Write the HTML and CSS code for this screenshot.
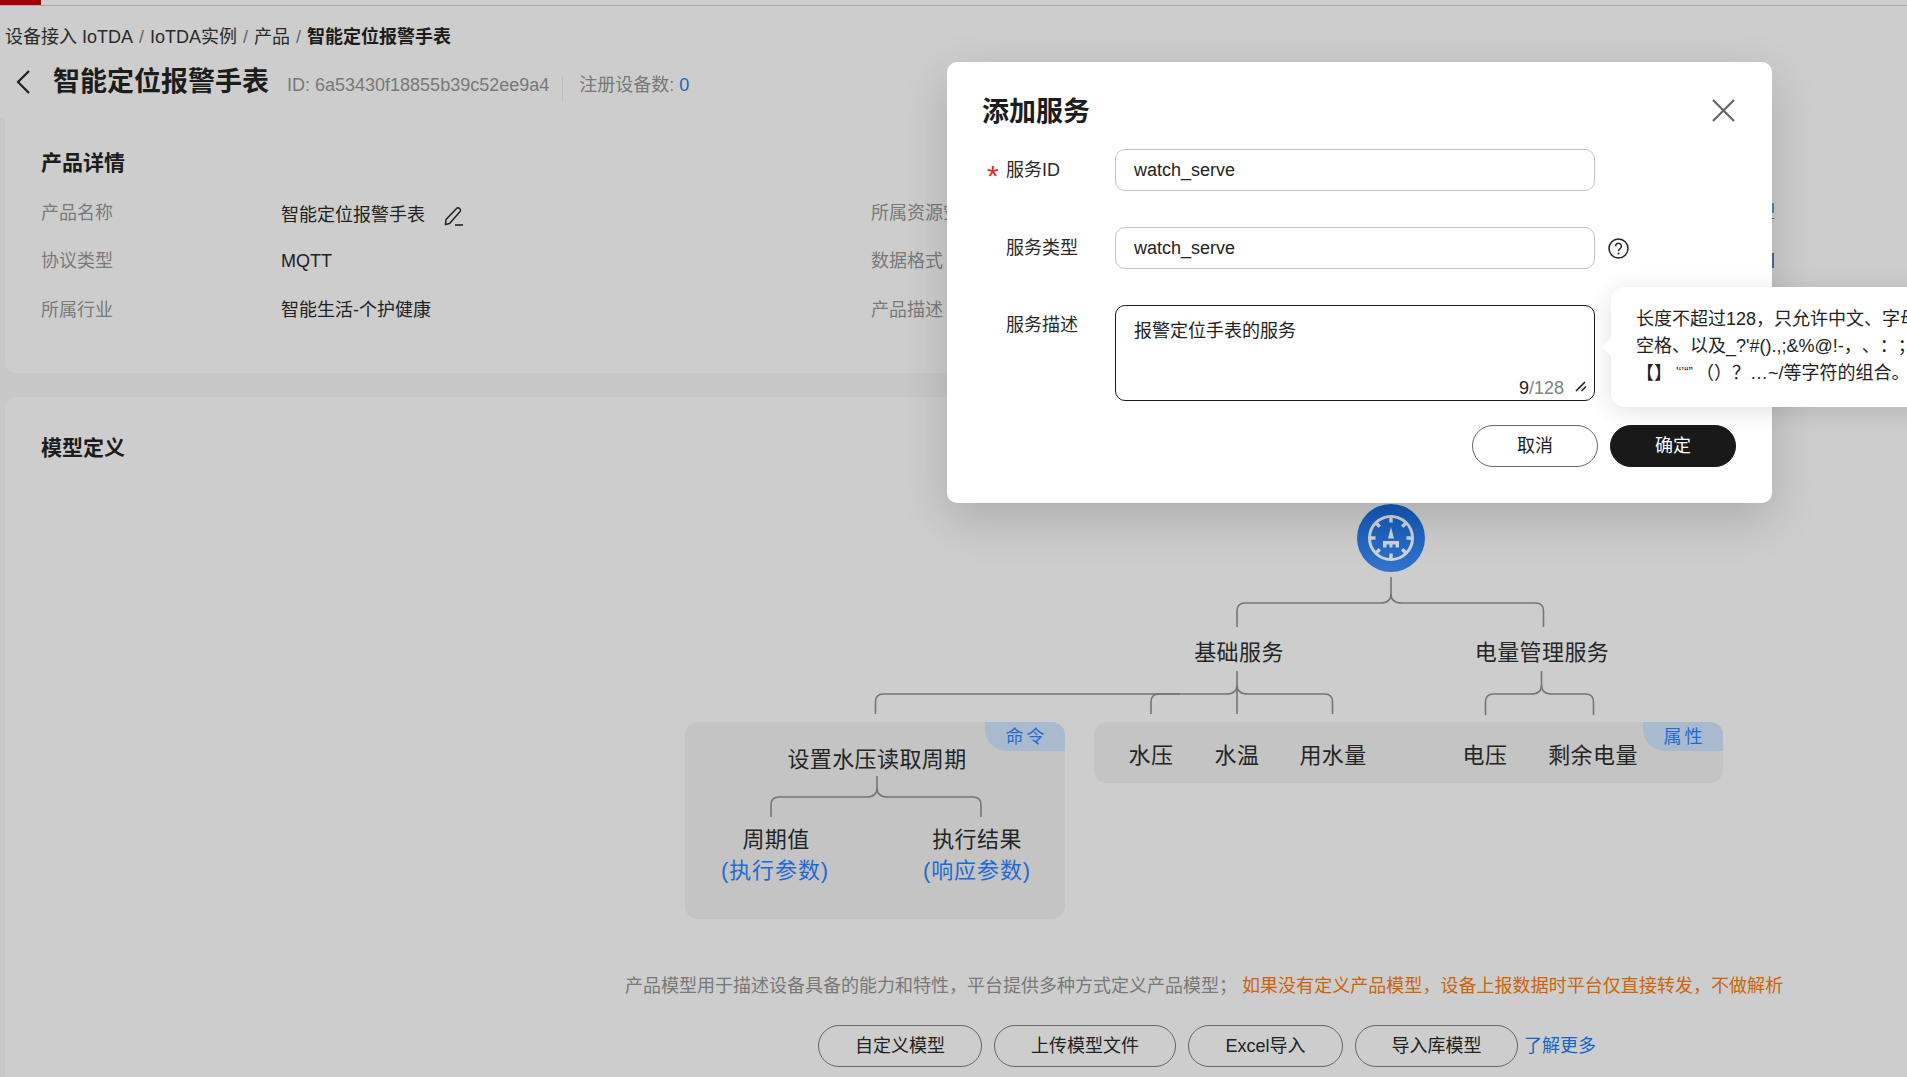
FILE: index.html
```html
<!DOCTYPE html>
<html lang="zh-CN">
<head>
<meta charset="utf-8">
<title>智能定位报警手表</title>
<link rel="stylesheet" href="styles.css">
</head>
<body>
<div class="topbar"><div class="topbar-red"></div></div>
<header class="page-head">
  <nav class="crumbs">
    <span>设备接入 IoTDA</span><i>/</i><span>IoTDA实例</span><i>/</i><span>产品</span><i>/</i><b>智能定位报警手表</b>
  </nav>
  <div class="title-row">
    <svg class="back" width="14" height="24" viewBox="0 0 14 24"><path d="M13 1 2 12l11 11" fill="none" stroke="#1f1f1f" stroke-width="2.2"/></svg>
    <h1>智能定位报警手表</h1>
    <span class="meta">ID: 6a53430f18855b39c52ee9a4</span>
    <span class="sep"></span>
    <span class="meta">注册设备数: <em>0</em></span>
  </div>
</header>

<section class="card card-detail">
  <h2>产品详情</h2>
  <div class="details">
    <span class="k">产品名称</span>
    <span class="v v-first">智能定位报警手表
      <svg class="edit" width="20" height="20" viewBox="0 0 20 20"><path d="M1.5 18.5 2 13.5 12.5 2.5a2 2 0 0 1 3-.1l.4.4a2 2 0 0 1 0 2.9L5.6 17.5z" fill="none" stroke="#222" stroke-width="1.5" stroke-linejoin="round"/><path d="M11 19h8" stroke="#222" stroke-width="1.6"/></svg>
    </span>
    <span class="k">所属资源空间</span>
    <span class="k">协议类型</span>
    <span class="v">MQTT</span>
    <span class="k">数据格式</span>
    <span class="k">所属行业</span>
    <span class="v">智能生活-个护健康</span>
    <span class="k">产品描述</span>
  </div>
  <span class="edge edge-a"></span><span class="edge edge-b"></span><span class="edge edge-c"></span>
</section>

<section class="card card-model">
  <h2>模型定义</h2>
  <div class="tree">
    <div class="group group-cmd"><span class="badge">命令</span></div>
    <div class="group group-prop"><span class="badge">属性</span></div>
    <svg class="links" width="1060" height="430" viewBox="0 0 1060 430">
      <g fill="none" stroke="#757575" stroke-width="1.6">
        <path d="M711 77V94Q711 103 700 103H565Q557 103 557 111V127"/>
        <path d="M711 94Q711 103 722 103H855.500Q863.500 103 863.500 111V127"/>
        <path d="M557 171V185Q557 194 546 194H203.500Q195.500 194 195.500 202V214"/>
        <path d="M557 185Q557 194 568 194H644.500Q652.500 194 652.500 202V214"/>
        <path d="M557 185V214"/>
        <path d="M471 214V202Q471 194 479 194H500"/>
        <path d="M861.500 171V185Q861.500 194 851 194H813.500Q805.500 194 805.500 202V215"/>
        <path d="M861.500 185Q861.500 194 872 194H905.500Q913.500 194 913.500 202V215"/>
        <path d="M197 276V288Q197 297 186 297H99Q91 297 91 305V317"/>
        <path d="M197 288Q197 297 208 297H293Q301 297 301 305V317"/>
      </g>
    </svg>
    <svg class="root" width="68" height="68" viewBox="0 0 68 68">
      <defs><linearGradient id="rootfill" x1="0" y1="0" x2="0" y2="1"><stop offset="0" stop-color="#1259bb"/><stop offset="1" stop-color="#3373ca"/></linearGradient></defs>
      <circle cx="34" cy="34" r="34" fill="url(#rootfill)"/>
      <circle cx="34" cy="34" r="21.500" fill="none" stroke="#ced3db" stroke-width="3"/>
      <g stroke="#ced3db" stroke-width="3.400">
        <path d="M34 12.500v6M34 49.500v6M12.500 34h6M49.500 34h6M18.800 18.800l4 4M49.200 18.800l-4 4M18.800 49.200l4-4M49.200 49.200l-4-4"/>
      </g>
      <path d="M34 23l3 11.500h-6z" fill="#ced3db"/>
      <path d="M26 37h16v6.500h-3.500v-3h-3v3h-3v-3h-3v3H26z" fill="#ced3db"/>
    </svg>
    <span class="node n-base">基础服务</span>
    <span class="node n-power">电量管理服务</span>
    <span class="node n-set">设置水压读取周期</span>
    <span class="node n-period">周期值</span>
    <span class="node node-blue n-in">(执行参数)</span>
    <span class="node n-result">执行结果</span>
    <span class="node node-blue n-out">(响应参数)</span>
    <span class="node n-p1">水压</span>
    <span class="node n-p2">水温</span>
    <span class="node n-p3">用水量</span>
    <span class="node n-p4">电压</span>
    <span class="node n-p5">剩余电量</span>
  </div>
  <p class="hint">产品模型用于描述设备具备的能力和特性，平台提供多种方式定义产品模型；<span>如果没有定义产品模型，设备上报数据时平台仅直接转发，不做解析</span></p>
  <div class="actions">
    <button class="btn btn-a">自定义模型</button>
    <button class="btn btn-b">上传模型文件</button>
    <button class="btn btn-c">Excel导入</button>
    <button class="btn btn-d">导入库模型</button>
    <a class="more">了解更多</a>
  </div>
</section>

<div class="modal">
  <div class="modal-head">
    <h3>添加服务</h3>
    <svg class="close" width="23" height="23" viewBox="0 0 23 23"><path d="M1 1l21 21M22 1 1 22" stroke="#666" stroke-width="2.200" fill="none"/></svg>
  </div>
  <div class="form">
    <div class="row">
      <label class="lab"><span class="star">*</span>服务ID</label>
      <input class="field" value="watch_serve">
    </div>
    <div class="row">
      <label class="lab"><span class="star"></span>服务类型</label>
      <input class="field" value="watch_serve">
      <svg class="help" width="21" height="21" viewBox="0 0 21 21"><circle cx="10.500" cy="10.500" r="9.500" fill="none" stroke="#222" stroke-width="1.500"/><path d="M7.600 8.200a2.900 2.900 0 1 1 4.600 2.300c-1 .7-1.700 1.200-1.700 2.500" fill="none" stroke="#222" stroke-width="1.500"/><circle cx="10.500" cy="15.500" r="1" fill="#222"/></svg>
    </div>
    <div class="row row-top">
      <label class="lab"><span class="star"></span>服务描述</label>
      <div class="area-wrap">
        <textarea class="area">报警定位手表的服务</textarea>
        <span class="count"><b>9</b>/128</span>
        <svg class="grip" width="12" height="11" viewBox="0 0 12 11"><path d="M1 10 10 1M6.500 10 11 5.500" stroke="#222" stroke-width="1.600"/></svg>
      </div>
    </div>
  </div>
  <div class="modal-foot">
    <button class="mbtn">取消</button>
    <button class="mbtn mbtn-ok">确定</button>
  </div>
  <div class="tip">
    <div>长度不超过128，只允许中文、字母、数字、</div>
    <div>空格、以及_?'#().,;&amp;%@!-，、：；</div>
    <div>【】<span class="q">'‘’“”</span>（）？…~/等字符的组合。</div>
  </div>
</div>
</body>
</html>
```
FILE: styles.css
```css
* { box-sizing: border-box; }
html, body { margin: 0; height: 100%; }
body {
  width: 1907px;
  height: 1077px;
  overflow: hidden;
  position: relative;
  background: #c7c7c7;
  color: #222;
  font: 18px/24px "Liberation Sans", "Noto Sans CJK SC", sans-serif;
}
h1, h2, h3, p { margin: 0; }

.topbar { height: 6px; background: #cdcdcd; border-bottom: 1px solid #aaa; }
.topbar-red { width: 41px; height: 5px; background: #a00009; }

.page-head { height: 112px; background: #cdcdcd; padding: 19px 0 0 5px; }
.crumbs { display: flex; color: #2a2a2a; white-space: nowrap; }
.crumbs i { font-style: normal; color: #666; margin: 0 6px; }
.crumbs b { color: #1c1c1c; }
.title-row { display: flex; align-items: baseline; margin-top: 13px; height: 40px; padding-left: 11px; }
.back { align-self: center; margin-right: 23px; }
.title-row h1 { font-size: 27px; line-height: 40px; font-weight: 700; color: #1c1c1c; margin-right: 18px; }
.meta { color: #787878; white-space: nowrap; }
.meta em { font-style: normal; color: #1664c8; }
.sep { width: 1px; height: 25px; background: #bdbdbd; margin: 0 16px 0 13px; align-self: flex-end; }

.card { position: relative; width: 1930px; margin-left: 5px; background: #cdcdcd; border-radius: 10px; padding: 30px 0 0 36px; }
.card h2 { font-size: 21px; line-height: 30px; font-weight: 700; color: #1c1c1c; }
.card-detail { height: 255px; margin-bottom: 24px; border-top-left-radius: 0; }
.card-model { height: 690px; padding-top: 36px; }

.details { display: grid; grid-template-columns: 240px 590px 300px; grid-template-rows: 24px 24px 24px; row-gap: 24.500px; margin-top: 22.500px; }
.k { color: #7a7a7a; white-space: nowrap; }
.v { color: #222; white-space: nowrap; display: flex; align-items: center; }
.v-first { margin-top: 5px; }
.edit { margin-left: 19px; margin-top: 2px; }
.edge { position: absolute; left: 1767px; width: 2px; background: #5b82b4; }
.edge-a { top: 85px; height: 10px; }
.edge-b { top: 100px; height: 1px; background: #666; }
.edge-c { top: 135px; height: 15px; background: #4c6a9d; }

.tree { position: relative; width: 1060px; height: 430px; margin: 37px 0 0 639px; }
.links { position: absolute; left: 0; top: 0; }
.root { position: absolute; left: 677px; top: 4px; }
.group { position: absolute; top: 222px; background: #c4c4c4; border-radius: 13px; }
.group-cmd { left: 5px; width: 380px; height: 197px; }
.group-prop { left: 414px; width: 629px; height: 61px; }
.badge {
  position: absolute; right: 0; top: 0; width: 80px; height: 29px; padding-left: 3px;
  background: #a9bacf; color: #1f6ad2; text-align: center; line-height: 30px;
  letter-spacing: 3px; border-radius: 0 13px 0 22px;
}
.node { position: absolute; transform: translate(-50%, -50%); white-space: nowrap; font-size: 22px; letter-spacing: .4px; line-height: 30px; color: #252525; }
.node-blue { color: #1f6ad2; letter-spacing: .9px; }
.n-base { left: 559px; top: 153px; }
.n-power { left: 862px; top: 153px; }
.n-set { left: 197px; top: 260px; }
.n-period { left: 96px; top: 340px; }
.n-in { left: 95px; top: 371px; }
.n-result { left: 297px; top: 340px; }
.n-out { left: 297px; top: 371px; }
.n-p1 { left: 471px; top: 256px; }
.n-p2 { left: 557px; top: 256px; }
.n-p3 { left: 653px; top: 256px; }
.n-p4 { left: 805px; top: 256px; }
.n-p5 { left: 913px; top: 256px; }

.hint { margin: 43px 0 0 584px; line-height: 27px; color: #787878; white-space: nowrap; }
.hint span { color: #c9650a; margin-left: 5px; letter-spacing: .04px; }
.actions { display: flex; align-items: center; margin: 25px 0 0 777px; }
.btn { height: 42px; padding: 0; border: 1px solid #666; border-radius: 21px; background: transparent; color: #222; font: inherit; margin-right: 12px; }
.btn-a { width: 164px; }
.btn-b { width: 182px; }
.btn-c { width: 155px; }
.btn-d { width: 163px; margin-right: 6px; }
.more { color: #1664c8; white-space: nowrap; }

.modal {
  position: absolute; left: 947px; top: 62px; width: 825px; height: 441px;
  background: #fff; border-radius: 10px; padding: 30px 36px 36px;
  box-shadow: 0 16px 48px rgba(0, 0, 0, .16);
}
.modal-head { display: flex; justify-content: space-between; align-items: center; height: 36px; }
.modal-head h3 { font-size: 27px; line-height: 36px; font-weight: 700; color: #1c1c1c; margin: 3px 0 0 -1px; }
.close { margin: 0 1px 0 0; }
.form { display: flex; flex-direction: column; gap: 36px; margin-top: 21px; }
.row { display: flex; align-items: center; height: 42px; }
.row-top { align-items: flex-start; height: 96px; }
.lab { display: flex; width: 132px; height: 40px; line-height: 40px; color: #2a2a2a; white-space: nowrap; }
.star { width: 23px; height: 40px; padding-left: 4px; color: #e5262b; font-size: 30px; line-height: 52px; }
.field { width: 480px; height: 42px; padding: 0 18px; border: 1px solid #c4c4c4; border-radius: 10px; font: inherit; color: #222; outline: none; background: #fff; }
.help { margin-left: 13px; }
.area-wrap { position: relative; width: 480px; height: 96px; }
.area { display: block; width: 100%; height: 100%; padding: 12px 18px; border: 1px solid #1a1a1a; border-radius: 10px; font: inherit; line-height: 26px; color: #222; outline: none; resize: none; background: #fff; }
.count { position: absolute; right: 31px; bottom: 1px; color: #808080; white-space: nowrap; }
.count b { font-weight: 400; color: #222; }
.grip { position: absolute; right: 8px; bottom: 9px; }
.modal-foot { display: flex; justify-content: flex-end; gap: 12px; margin-top: 24px; }
.mbtn { width: 126px; height: 42px; padding: 0; border: 1px solid #666; border-radius: 21px; background: #fff; color: #222; font: inherit; }
.mbtn-ok { background: #191919; border-color: #191919; color: #fff; }

.tip {
  position: absolute; left: 664px; top: 225px; width: 360px; height: 120px;
  padding: 19px 0 0 25px; background: #fff; border-radius: 14px;
  box-shadow: 0 4px 24px rgba(0, 0, 0, .12); line-height: 26.500px; color: #222; white-space: nowrap;
  text-spacing-trim: space-all;
}
.tip::before {
  content: ""; position: absolute; left: -9px; top: 50px; width: 0; height: 0;
  border-style: solid; border-width: 10px 10px 10px 0; border-color: transparent #fff transparent transparent;
}
.q { font-size: 13px; vertical-align: 3px; margin: 0 3px 0 4px; }
```
